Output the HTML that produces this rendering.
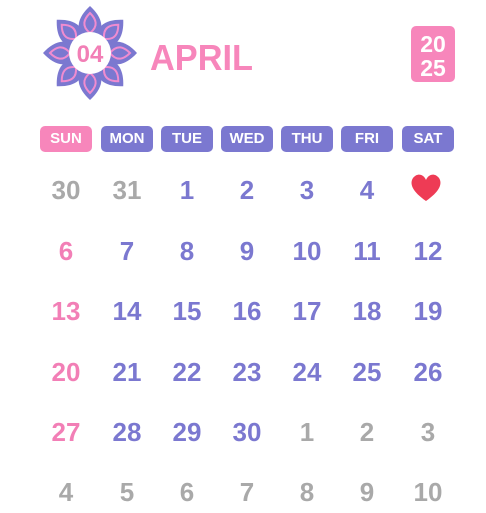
<!DOCTYPE html>
<html><head><style>
html,body{margin:0;padding:0;background:#fff;width:486px;height:513px;overflow:hidden;position:relative;font-family:"Liberation Sans",sans-serif;}
.h{position:absolute;top:126px;width:52px;height:26px;border-radius:5px;background:#7b78d0;color:#fff;font-weight:bold;font-size:15px;line-height:26px;text-align:center;}
.d{position:absolute;width:60px;margin-left:-30px;text-align:center;font-weight:bold;font-size:26px;line-height:30px;color:#7b78d0;}
.g{color:#a9a9a9}.p{color:#f27fb6}
</style></head><body>
<svg style="position:absolute;left:0;top:0" width="486" height="513">
<g transform="translate(90,53)">
<g id="pt">
<path d="M0,-8 C-18,-22 -12,-36 0,-47 C12,-36 18,-22 0,-8Z" fill="#7b78d0"/>
<path d="M0,-20 C-9,-27 -6,-34 0,-40 C6,-34 9,-27 0,-20Z" fill="none" stroke="#f08cd0" stroke-width="2"/>
</g>
<use href="#pt" transform="rotate(45)"/>
<use href="#pt" transform="rotate(90)"/>
<use href="#pt" transform="rotate(135)"/>
<use href="#pt" transform="rotate(180)"/>
<use href="#pt" transform="rotate(225)"/>
<use href="#pt" transform="rotate(270)"/>
<use href="#pt" transform="rotate(315)"/>
<circle r="21" fill="#fff"/>
<text x="0" y="9" text-anchor="middle" font-family="Liberation Sans" font-weight="bold" font-size="24" fill="#f27fb6">04</text>
</g>
<text x="150" y="70" font-family="Liberation Sans" font-weight="bold" font-size="36" textLength="103" lengthAdjust="spacingAndGlyphs" fill="#f786bb">APRIL</text>
<rect x="411" y="26" width="44" height="56" rx="5" fill="#f786bb"/>
<text x="433" y="52" text-anchor="middle" font-family="Liberation Sans" font-weight="bold" font-size="23" fill="#fff">20</text>
<text x="433" y="76" text-anchor="middle" font-family="Liberation Sans" font-weight="bold" font-size="23" fill="#fff">25</text>
<path d="M426,201 C413,192 409,184 413,178 C418,172 424,175 426,180 C428,175 434,172 439,178 C443,184 439,192 426,201Z" fill="#ee3b55"/>
</svg>
<div class="h" style="left:40px;background:#f786bb">SUN</div>
<div class="h" style="left:101px">MON</div>
<div class="h" style="left:161px">TUE</div>
<div class="h" style="left:221px">WED</div>
<div class="h" style="left:281px">THU</div>
<div class="h" style="left:341px">FRI</div>
<div class="h" style="left:402px">SAT</div>

<div class="d g" style="left:66px;top:175px">30</div>
<div class="d g" style="left:127px;top:175px">31</div>
<div class="d" style="left:187px;top:175px">1</div>
<div class="d" style="left:247px;top:175px">2</div>
<div class="d" style="left:307px;top:175px">3</div>
<div class="d" style="left:367px;top:175px">4</div>

<div class="d p" style="left:66px;top:236px">6</div>
<div class="d" style="left:127px;top:236px">7</div>
<div class="d" style="left:187px;top:236px">8</div>
<div class="d" style="left:247px;top:236px">9</div>
<div class="d" style="left:307px;top:236px">10</div>
<div class="d" style="left:367px;top:236px">11</div>
<div class="d" style="left:428px;top:236px">12</div>

<div class="d p" style="left:66px;top:296px">13</div>
<div class="d" style="left:127px;top:296px">14</div>
<div class="d" style="left:187px;top:296px">15</div>
<div class="d" style="left:247px;top:296px">16</div>
<div class="d" style="left:307px;top:296px">17</div>
<div class="d" style="left:367px;top:296px">18</div>
<div class="d" style="left:428px;top:296px">19</div>

<div class="d p" style="left:66px;top:357px">20</div>
<div class="d" style="left:127px;top:357px">21</div>
<div class="d" style="left:187px;top:357px">22</div>
<div class="d" style="left:247px;top:357px">23</div>
<div class="d" style="left:307px;top:357px">24</div>
<div class="d" style="left:367px;top:357px">25</div>
<div class="d" style="left:428px;top:357px">26</div>

<div class="d p" style="left:66px;top:417px">27</div>
<div class="d" style="left:127px;top:417px">28</div>
<div class="d" style="left:187px;top:417px">29</div>
<div class="d" style="left:247px;top:417px">30</div>
<div class="d g" style="left:307px;top:417px">1</div>
<div class="d g" style="left:367px;top:417px">2</div>
<div class="d g" style="left:428px;top:417px">3</div>

<div class="d g" style="left:66px;top:477px">4</div>
<div class="d g" style="left:127px;top:477px">5</div>
<div class="d g" style="left:187px;top:477px">6</div>
<div class="d g" style="left:247px;top:477px">7</div>
<div class="d g" style="left:307px;top:477px">8</div>
<div class="d g" style="left:367px;top:477px">9</div>
<div class="d g" style="left:428px;top:477px">10</div>
</body></html>
